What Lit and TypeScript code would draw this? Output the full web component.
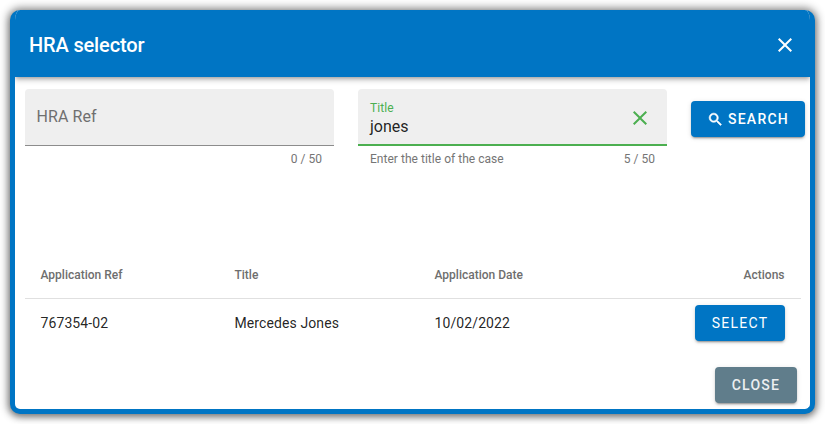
import { LitElement, html, css } from "lit";
import { customElement } from "lit/decorators.js";

const X = (size: number) => html`<svg width=${size} height=${size} viewBox="0 0 24 24" fill="currentColor"><path d="M19 6.41 17.59 5 12 10.59 6.41 5 5 6.41 10.59 12 5 17.59 6.41 19 12 13.41 17.59 19 19 17.59 13.41 12z"/></svg>`;

@customElement("app-root")
export class AppRoot extends LitElement {
  static styles = css`
    :host { display: block; width: 825px; height: 424px; overflow: hidden; background: #fff; font-family: Roboto, sans-serif; padding: 10px; box-sizing: border-box; }
    .dialog { width: 805px; height: 404px; box-sizing: border-box; background: #fff; border: 5px solid #0075c4; border-top: 0; border-radius: 10px; display: flex; flex-direction: column; box-shadow: 0 0 8px 2px rgba(0,0,0,.45), 0 3px 6px rgba(0,0,0,.25); overflow: hidden; }
    .head { height: 67px; flex: none; box-sizing: border-box; background: #0075c4; color: #fff; display: flex; align-items: center; justify-content: space-between; padding: 2px 13px 0 14px; box-shadow: 0 2px 4px -1px rgba(0,0,0,.3), 0 4px 5px rgba(0,0,0,.14); position: relative; }
    .head h1 { margin: 0; font-size: 20px; font-weight: 500; letter-spacing: -.15px; line-height: 32px; }
    .head svg { display: block; }
    .body { flex: 1; display: flex; flex-direction: column; padding: 12px 5px 6px 10px; min-height: 0; }
    .search { display: flex; gap: 24px; height: 162px; flex: none; align-items: flex-start; }
    .field { width: 309px; }
    .box { height: 57px; box-sizing: border-box; background: #efefef; border-radius: 4px 4px 0 0; border-bottom: 1px solid #8c8c8c; padding: 0 12px 0 11.5px; display: flex; align-items: center; justify-content: space-between; }
    .box.focus { border-bottom: 2px solid #4caf50; padding-left: 12px; }
    .ph { font-size: 16px; color: #6f6f6f; letter-spacing: .1px; position: relative; top: -.5px; }
    .stack { display: flex; flex-direction: column; gap: 1px; padding-top: 4px; }
    .label { font-size: 12px; line-height: 16px; color: #4caf50; letter-spacing: .1px; }
    .value { font-size: 16px; line-height: 20px; color: rgba(0,0,0,.87); }
    .clear { color: #4caf50; display: block; margin: 6px 3.5px 0 0; }
    .hint { display: flex; justify-content: space-between; padding: 6px 12px 0; font-size: 12px; line-height: 14px; color: #757575; letter-spacing: .03px; }
    .hint .count { margin-left: auto; }
    .btn { border: 0; margin: 0; font-family: inherit; font-size: 14px; font-weight: 500; letter-spacing: 1.25px; color: #fff; background: #0075c4; height: 36px; border-radius: 4px; box-shadow: 0 3px 1px -2px rgba(0,0,0,.2), 0 2px 2px rgba(0,0,0,.14), 0 1px 5px rgba(0,0,0,.12); display: flex; align-items: center; justify-content: center; padding: 0; flex: none; }
    .btn svg { display: block; margin-right: 4px; }
    .go { width: 114px; margin-top: 12px; }
    .sel { width: 90px; font-weight: 400; }
    .close { width: 82px; background: #607d8b; color: #eceff1; letter-spacing: 1.25px; }
    .table { width: 776px; flex: none; }
    .row { display: grid; grid-template-columns: 194px 200px 1fr auto; align-items: center; padding: 0 16px 0 15.5px; }
    .thead { height: 47px; border-bottom: 1px solid #e0e0e0; font-size: 12px; font-weight: 500; color: #6e6e6e; padding-right: 16.5px; }
    .trow { height: 48px; font-size: 14px; color: rgba(0,0,0,.87); letter-spacing: .1px; }
    .end { text-align: right; }
    .foot { display: flex; justify-content: flex-end; margin-top: 20px; padding-right: 8px; }
  `;

  render() {
    return html`
      <div class="dialog">
        <div class="head">
          <h1>HRA selector</h1>
          ${X(24)}
        </div>
        <div class="body">
          <div class="search">
            <div class="field">
              <div class="box"><span class="ph">HRA Ref</span></div>
              <div class="hint"><span class="count">0 / 50</span></div>
            </div>
            <div class="field">
              <div class="box focus">
                <div class="stack"><span class="label">Title</span><span class="value">jones</span></div>
                <span class="clear">${X(24)}</span>
              </div>
              <div class="hint"><span>Enter the title of the case</span><span class="count">5 / 50</span></div>
            </div>
            <button class="btn go">
              <svg width="17" height="17" viewBox="0 0 24 24" fill="currentColor" stroke="currentColor" stroke-width=".8"><path d="M15.5 14h-.79l-.28-.27A6.47 6.47 0 0 0 16 9.5 6.5 6.5 0 1 0 9.5 16c1.61 0 3.09-.59 4.23-1.57l.27.28v.79l5 4.99L20.49 19l-4.99-5zm-6 0C7.01 14 5 11.99 5 9.5S7.01 5 9.5 5 14 7.01 14 9.5 11.99 14 9.5 14z"/></svg>
              SEARCH
            </button>
          </div>
          <div class="table">
            <div class="row thead"><span>Application Ref</span><span>Title</span><span>Application Date</span><span class="end">Actions</span></div>
            <div class="row trow"><span>767354-02</span><span>Mercedes Jones</span><span>10/02/2022</span><button class="btn sel">SELECT</button></div>
          </div>
          <div class="foot"><button class="btn close">CLOSE</button></div>
        </div>
      </div>
    `;
  }
}
